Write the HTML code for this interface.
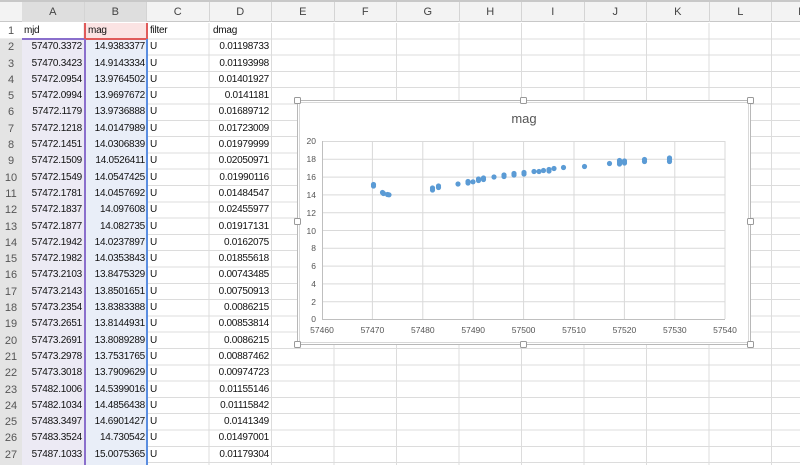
<!DOCTYPE html>
<html><head><meta charset="utf-8"><style>
body{margin:0;width:800px;height:465px;overflow:hidden;background:#fff;font-family:"Liberation Sans",sans-serif;position:relative}
.grid{position:absolute;left:0;top:23px;width:800px;height:442px;
background-image:repeating-linear-gradient(to bottom,transparent 0,transparent 15.3px,#dcdcdc 15.3px,#dcdcdc 16.3px),
repeating-linear-gradient(to right,transparent 0,transparent 61.5px,#dcdcdc 61.5px,#dcdcdc 62.5px);background-position:0 0,22px 0}
.hdr{position:absolute;left:0;top:0;width:800px;height:22px;background:#f3f3f3;border-top:2px solid #c8c8c8;border-bottom:1px solid #c8c8c8;box-sizing:border-box}
.ch{position:absolute;top:2px;height:20px;line-height:20px;width:62.5px;text-align:center;font-size:11px;color:#444;border-right:1px solid #d4d4d4;box-sizing:border-box}
.col{position:absolute;top:23px;font-size:10px;letter-spacing:-0.25px;line-height:16.3px;color:#111}
.col div{height:16.3px;white-space:nowrap}
</style></head><body>
<div class="grid"></div>
<div style="position:absolute;left:22px;top:39.3px;width:63px;height:425.7px;background:#eceaf4"></div>
<div style="position:absolute;left:85px;top:39.3px;width:62px;height:425.7px;background:#e9eef8"></div>
<div style="position:absolute;left:0;top:39.3px;width:22px;height:425.7px;background:#e4e4e4"></div>
<div class="hdr"></div>
<div style="position:absolute;left:22px;top:2px;width:125px;height:20px;background:#dedede"></div>
<div class="ch" style="left:22px">A</div><div class="ch" style="left:84.5px">B</div><div class="ch" style="left:147px">C</div><div class="ch" style="left:209.5px">D</div><div class="ch" style="left:272px">E</div><div class="ch" style="left:334.5px">F</div><div class="ch" style="left:397px">G</div><div class="ch" style="left:459.5px">H</div><div class="ch" style="left:522px">I</div><div class="ch" style="left:584.5px">J</div><div class="ch" style="left:647px">K</div><div class="ch" style="left:709.5px">L</div><div class="ch" style="left:772px">M</div>
<div class="col" style="left:0;width:22px;text-align:center;color:#555;top:23px;font-size:11px;letter-spacing:0"><div>1</div><div>2</div><div>3</div><div>4</div><div>5</div><div>6</div><div>7</div><div>8</div><div>9</div><div>10</div><div>11</div><div>12</div><div>13</div><div>14</div><div>15</div><div>16</div><div>17</div><div>18</div><div>19</div><div>20</div><div>21</div><div>22</div><div>23</div><div>24</div><div>25</div><div>26</div><div>27</div></div>
<div style="position:absolute;left:85px;top:23px;width:62px;height:16px;background:#fbe3e3"></div>
<div style="position:absolute;left:22px;top:38px;width:63px;height:2px;background:#8a6fcc"></div>
<div style="position:absolute;left:85px;top:38px;width:62px;height:2px;background:#e05a5a"></div>
<div style="position:absolute;left:84px;top:38px;width:2px;height:427px;background:#8a6fcc"></div>
<div style="position:absolute;left:146px;top:38px;width:2px;height:427px;background:#5a8de0"></div>
<div style="position:absolute;left:84px;top:23px;width:2px;height:16px;background:#e05a5a"></div>
<div style="position:absolute;left:146px;top:23px;width:2px;height:16px;background:#e05a5a"></div>
<div class="col" style="left:22px;width:60px;text-align:right"><div style="text-align:left;padding-left:2px">mjd</div><div>57470.3372</div><div>57470.3423</div><div>57472.0954</div><div>57472.0994</div><div>57472.1179</div><div>57472.1218</div><div>57472.1451</div><div>57472.1509</div><div>57472.1549</div><div>57472.1781</div><div>57472.1837</div><div>57472.1877</div><div>57472.1942</div><div>57472.1982</div><div>57473.2103</div><div>57473.2143</div><div>57473.2354</div><div>57473.2651</div><div>57473.2691</div><div>57473.2978</div><div>57473.3018</div><div>57482.1006</div><div>57482.1034</div><div>57483.3497</div><div>57483.3524</div><div>57487.1033</div></div>
<div class="col" style="left:85px;width:60px;text-align:right"><div style="text-align:left;padding-left:3px">mag</div><div>14.9383377</div><div>14.9143334</div><div>13.9764502</div><div>13.9697672</div><div>13.9736888</div><div>14.0147989</div><div>14.0306839</div><div>14.0526411</div><div>14.0547425</div><div>14.0457692</div><div>14.097608</div><div>14.082735</div><div>14.0237897</div><div>14.0353843</div><div>13.8475329</div><div>13.8501651</div><div>13.8383388</div><div>13.8144931</div><div>13.8089289</div><div>13.7531765</div><div>13.7909629</div><div>14.5399016</div><div>14.4856438</div><div>14.6901427</div><div>14.730542</div><div>15.0075365</div></div>
<div class="col" style="left:150px"><div>filter</div><div>U</div><div>U</div><div>U</div><div>U</div><div>U</div><div>U</div><div>U</div><div>U</div><div>U</div><div>U</div><div>U</div><div>U</div><div>U</div><div>U</div><div>U</div><div>U</div><div>U</div><div>U</div><div>U</div><div>U</div><div>U</div><div>U</div><div>U</div><div>U</div><div>U</div><div>U</div></div>
<div class="col" style="left:210px;width:59px;text-align:right"><div style="text-align:left;padding-left:3px">dmag</div><div>0.01198733</div><div>0.01193998</div><div>0.01401927</div><div>0.0141181</div><div>0.01689712</div><div>0.01723009</div><div>0.01979999</div><div>0.02050971</div><div>0.01990116</div><div>0.01484547</div><div>0.02455977</div><div>0.01917131</div><div>0.0162075</div><div>0.01855618</div><div>0.00743485</div><div>0.00750913</div><div>0.0086215</div><div>0.00853814</div><div>0.0086215</div><div>0.00887462</div><div>0.00974723</div><div>0.01155146</div><div>0.01115842</div><div>0.0141349</div><div>0.01497001</div><div>0.01179304</div></div>
<svg style="position:absolute;left:0;top:0" width="800" height="465" font-family="Liberation Sans, sans-serif">
<rect x="297.5" y="100.5" width="453" height="244" fill="#fff" stroke="#b8b8b8"/>
<rect x="299.5" y="102.5" width="449" height="240" fill="none" stroke="#d8d8d8"/>
<g fill="#fff" stroke="#999">
<rect x="294.5" y="97.5" width="6" height="6" rx="1"/><rect x="520.5" y="97.5" width="6" height="6" rx="1"/><rect x="747.5" y="97.5" width="6" height="6" rx="1"/>
<rect x="294.5" y="218.5" width="6" height="6" rx="1"/><rect x="747.5" y="218.5" width="6" height="6" rx="1"/>
<rect x="294.5" y="341.5" width="6" height="6" rx="1"/><rect x="520.5" y="341.5" width="6" height="6" rx="1"/><rect x="747.5" y="341.5" width="6" height="6" rx="1"/></g>
<text x="524" y="123" font-size="13" fill="#555" text-anchor="middle">mag</text>
<g stroke="#d9d9d9" stroke-width="1">
<line x1="322" y1="141.5" x2="725" y2="141.5"/><line x1="322" y1="159.3" x2="725" y2="159.3"/><line x1="322" y1="177.1" x2="725" y2="177.1"/><line x1="322" y1="194.9" x2="725" y2="194.9"/><line x1="322" y1="212.7" x2="725" y2="212.7"/><line x1="322" y1="230.5" x2="725" y2="230.5"/><line x1="322" y1="248.3" x2="725" y2="248.3"/><line x1="322" y1="266.1" x2="725" y2="266.1"/><line x1="322" y1="283.9" x2="725" y2="283.9"/><line x1="322" y1="301.7" x2="725" y2="301.7"/>
<line x1="372.4" y1="141" x2="372.4" y2="319"/><line x1="422.8" y1="141" x2="422.8" y2="319"/><line x1="473.2" y1="141" x2="473.2" y2="319"/><line x1="523.6" y1="141" x2="523.6" y2="319"/><line x1="574" y1="141" x2="574" y2="319"/><line x1="624.4" y1="141" x2="624.4" y2="319"/><line x1="674.8" y1="141" x2="674.8" y2="319"/><line x1="725" y1="141" x2="725" y2="319"/>
</g>
<line x1="322" y1="319.5" x2="725" y2="319.5" stroke="#bfbfbf"/><line x1="322.5" y1="141" x2="322.5" y2="319" stroke="#bfbfbf"/>
<g font-size="8.5" fill="#555" text-anchor="end">
<text x="316" y="144">20</text><text x="316" y="162">18</text><text x="316" y="180">16</text><text x="316" y="198">14</text><text x="316" y="216">12</text><text x="316" y="234">10</text><text x="316" y="251">8</text><text x="316" y="269">6</text><text x="316" y="287">4</text><text x="316" y="305">2</text><text x="316" y="322">0</text></g>
<g font-size="8.5" fill="#555" text-anchor="middle">
<text x="322" y="333">57460</text><text x="372.4" y="333">57470</text><text x="422.8" y="333">57480</text><text x="473.2" y="333">57490</text><text x="523.6" y="333">57500</text><text x="574" y="333">57510</text><text x="624.4" y="333">57520</text><text x="674.8" y="333">57530</text><text x="725" y="333">57540</text></g>
<g fill="#5b9bd5">
<circle cx="373.5" cy="184.5" r="2.6"/><circle cx="373.5" cy="186" r="2.6"/><circle cx="382.5" cy="192.5" r="2.6"/><circle cx="383.5" cy="193.5" r="2.6"/><circle cx="387.5" cy="194.5" r="2.6"/><circle cx="389" cy="194.8" r="2.6"/>
<circle cx="432.5" cy="188" r="2.6"/><circle cx="432.5" cy="190" r="2.6"/><circle cx="438.5" cy="186" r="2.6"/><circle cx="438.5" cy="187.5" r="2.6"/>
<circle cx="458" cy="184" r="2.6"/><circle cx="468" cy="183" r="2.6"/><circle cx="468" cy="181.5" r="2.6"/><circle cx="473" cy="181.8" r="2.6"/><circle cx="478.5" cy="180.5" r="2.6"/><circle cx="478.5" cy="179" r="2.6"/><circle cx="483.5" cy="179.5" r="2.6"/><circle cx="483.5" cy="178" r="2.6"/>
<circle cx="494" cy="177" r="2.6"/><circle cx="504" cy="176.5" r="2.6"/><circle cx="504" cy="175" r="2.6"/><circle cx="514" cy="175" r="2.6"/><circle cx="514" cy="173.5" r="2.6"/><circle cx="524" cy="174" r="2.6"/><circle cx="524" cy="172.5" r="2.6"/>
<circle cx="534" cy="171.5" r="2.6"/><circle cx="539" cy="171.5" r="2.6"/><circle cx="543.5" cy="170.5" r="2.6"/><circle cx="549" cy="171" r="2.6"/><circle cx="549" cy="169.5" r="2.6"/><circle cx="554" cy="168.5" r="2.6"/><circle cx="563.5" cy="167.5" r="2.6"/><circle cx="584.5" cy="166.5" r="2.6"/>
<circle cx="609.5" cy="163.5" r="2.6"/><circle cx="619.5" cy="164" r="2.6"/><circle cx="619.5" cy="162" r="2.6"/><circle cx="619.5" cy="160.5" r="2.6"/><circle cx="624.5" cy="163" r="2.6"/><circle cx="624.5" cy="161" r="2.6"/>
<circle cx="644.5" cy="161.5" r="2.6"/><circle cx="644.5" cy="159.5" r="2.6"/><circle cx="669.5" cy="161.5" r="2.6"/><circle cx="669.5" cy="159.5" r="2.6"/><circle cx="669.5" cy="158" r="2.6"/>
</g>
</svg>
</body></html>
